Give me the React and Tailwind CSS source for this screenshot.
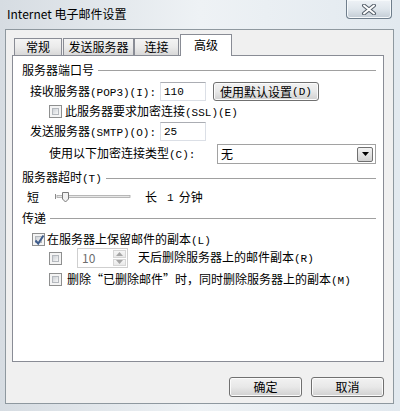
import React from "react";

// ASCII parts of the dialog text use a half-width mono look
function A({ children }) {
  return <span className="font-['Liberation_Mono',monospace] text-[11px]">{children}</span>;
}

function Check({ checked }) {
  return (
    <div className="relative w-[13px] h-[13px] shrink-0 border border-[#8e8f8f] bg-[#f4f4f4] p-[2px]">
      <div className="w-full h-full border border-[#b4b8bd] bg-gradient-to-br from-[#cdd1d6] to-[#f7f7f7]" />
      {checked && (
        <svg className="absolute inset-0" width="13" height="13" viewBox="0 0 13 13">
          <path d="M2.5 6.5 L5.2 9.5 L10.5 1.5" fill="none" stroke="#3e5c8c" strokeWidth="2" />
        </svg>
      )}
    </div>
  );
}

function Section({ title, className = "" }) {
  return (
    <div className={`flex items-center h-[14px] ${className}`}>
      <span className="whitespace-nowrap">{title}</span>
      <div className="flex-1 h-px bg-[#a0a0a0] ml-[4px]" />
    </div>
  );
}

function TextBox({ value }) {
  return (
    <div className="w-[46px] h-[19px] border border-[#dbdfe6] border-t-[#abadb3] bg-white flex items-center pl-[3px]">
      <A>{value}</A>
    </div>
  );
}

function Button({ children, className = "" }) {
  return (
    <div
      className={`flex items-center justify-center rounded-[3px] border border-[#707070] bg-gradient-to-b from-[#f2f2f2] via-[#e8e8e8] to-[#d0d0d0] shadow-[inset_0_0_0_1px_#fbfbfb] ${className}`}
    >
      {children}
    </div>
  );
}

function Tab({ label, selected, className = "" }) {
  if (selected) {
    return (
      <div className={`h-[22px] border border-b-0 border-[#898c95] bg-white flex items-center justify-center pb-[2px] ${className}`}>
        {label}
      </div>
    );
  }
  return (
    <div
      className={`h-[17px] mb-px border border-b-0 border-[#898c95] bg-gradient-to-b from-[#f4f4f4] via-[#ebebeb] to-[#d8d8d8] flex items-center justify-center ${className}`}
    >
      {label}
    </div>
  );
}

function CloseButton() {
  return (
    <div className="w-[46px] h-[19px] rounded-b-[4px] border border-t-0 border-[#6f7e8c] bg-gradient-to-b from-[#eef2f6] via-[#dfe6ec] to-[#c3ccd5] shadow-[inset_0_0_0_1px_#f6f9fb] flex items-center justify-center">
      <svg width="16" height="11" viewBox="0 0 16 11">
        <path d="M3 1.5 L13 9.5 M13 1.5 L3 9.5" stroke="#56606b" strokeWidth="4" strokeLinecap="round" />
        <path d="M3 1.5 L13 9.5 M13 1.5 L3 9.5" stroke="#ffffff" strokeWidth="2" strokeLinecap="round" />
      </svg>
    </div>
  );
}

function Slider() {
  return (
    <svg width="76" height="12" viewBox="0 0 76 12" className="shrink-0">
      <path d="M0.5 3 V8" stroke="#8a8a8a" />
      <rect x="2" y="4.5" width="73" height="2" fill="#e6e6e6" stroke="#a8a8a8" strokeWidth="0.8" />
      <path d="M7.5 1.5 H13.5 V8 L10.5 11 L7.5 8 Z" fill="#f1f1f1" stroke="#7a7a7a" />
    </svg>
  );
}

function Spinner() {
  return (
    <div className="w-[51px] h-[20px] border border-[#cfcfcf] bg-white flex">
      <div className="flex-1 flex items-center pl-[4px] text-[#6d6d6d]">10</div>
      <div className="w-[15px] flex flex-col p-px gap-px">
        <div className="flex-1 border border-[#d6d6d6] bg-gradient-to-b from-[#f6f6f6] to-[#e9e9e9] flex items-center justify-center">
          <svg width="7" height="4" viewBox="0 0 7 4">
            <path d="M0 4 L3.5 0 L7 4 Z" fill="#a6a6a6" />
          </svg>
        </div>
        <div className="flex-1 border border-[#d6d6d6] bg-gradient-to-b from-[#f6f6f6] to-[#e9e9e9] flex items-center justify-center">
          <svg width="7" height="4" viewBox="0 0 7 4">
            <path d="M0 0 L3.5 4 L7 0 Z" fill="#a6a6a6" />
          </svg>
        </div>
      </div>
    </div>
  );
}

function Select() {
  return (
    <div className="w-[159px] h-[20px] border border-[#a2a2a2] bg-white flex items-center">
      <span className="flex-1 pl-[3px]">无</span>
      <div className="w-[16px] h-[15px] mr-[2px] rounded-[2px] border border-[#707070] bg-gradient-to-b from-[#f3f3f3] to-[#d2d2d2] flex items-center justify-center">
        <svg width="7" height="4" viewBox="0 0 7 4">
          <path d="M0 0 H7 L3.5 4 Z" fill="#000" />
        </svg>
      </div>
    </div>
  );
}

export default function App() {
  return (
    <div className="w-[400px] h-[411px] overflow-hidden flex flex-col bg-gradient-to-r from-[#d6dce2] via-[#eef2f5] to-[#e2e9ef] text-black text-[12px] leading-[14px] font-['Noto_Sans_CJK_SC',sans-serif]">
      {/* Title bar */}
      <div className="h-[29px] flex items-start justify-between pl-[7px] pr-[8px] shrink-0">
        <div className="pt-[7px] text-[12px] leading-[14px]">Internet 电子邮件设置</div>
        <CloseButton />
      </div>

      {/* Client area */}
      <div className="ml-[5px] w-[389px] h-[375px] border border-[#8e989f] bg-[#f0f0f0] flex flex-col pt-[4px]">
        <div className="pl-[6px]">
          {/* Tabs */}
          <div className="relative z-10 flex items-end h-[22px] pl-[2px]">
            <Tab label="常规" className="w-[48px]" />
            <Tab label="发送服务器" className="w-[71px] ml-px" />
            <Tab label="连接" className="w-[45px]" />
            <Tab label="高级" selected className="w-[52px] ml-px" />
          </div>

          {/* Tab panel */}
          <div className="-mt-px w-[372px] h-[307px] border border-[#898c95] bg-white flex flex-col pl-[9px] pr-[7px] pt-[7px]">
            <Section title="服务器端口号" />

            <div className="mt-[5px] h-[19px] flex items-center pl-[8px]">
              <span className="w-[130px] whitespace-nowrap">
                接收服务器<A>(POP3)(I):</A>
              </span>
              <TextBox value="110" />
              <Button className="ml-[7px] w-[106px] h-[19px]">
                使用默认设置<A>(D)</A>
              </Button>
            </div>

            <div className="mt-[4px] h-[13px] flex items-center pl-[27px]">
              <Check />
              <span className="ml-[3px] whitespace-nowrap">
                此服务器要求加密连接<A>(SSL)(E)</A>
              </span>
            </div>

            <div className="mt-[4px] h-[19px] flex items-center pl-[8px]">
              <span className="w-[130px] whitespace-nowrap">
                发送服务器<A>(SMTP)(O):</A>
              </span>
              <TextBox value="25" />
            </div>

            <div className="mt-[3px] h-[20px] flex items-center pl-[27px]">
              <span className="w-[168px] whitespace-nowrap">
                使用以下加密连接类型<A>(C):</A>
              </span>
              <Select />
            </div>

            <Section
              className="mt-[7px]"
              title={
                <>
                  服务器超时<A>(T)</A>
                </>
              }
            />

            <div className="mt-[5px] h-[14px] flex items-center pl-[5px]">
              <span>短</span>
              <div className="ml-[16px] flex items-center">
                <Slider />
              </div>
              <span className="ml-[14px]">长</span>
              <span className="ml-[10px]">
                <A>1</A>
              </span>
              <span className="ml-[5px]">分钟</span>
            </div>

            <Section className="mt-[7px]" title="传递" />

            <div className="mt-[8px] h-[13px] flex items-center pl-[10px]">
              <Check checked />
              <span className="ml-[2px] whitespace-nowrap">
                在服务器上保留邮件的副本<A>(L)</A>
              </span>
            </div>

            <div className="mt-[2px] h-[20px] flex items-center pl-[27px]">
              <Check />
              <div className="ml-[15px]">
                <Spinner />
              </div>
              <span className="ml-[10px] whitespace-nowrap">
                天后删除服务器上的邮件副本<A>(R)</A>
              </span>
            </div>

            <div className="mt-[5px] h-[13px] flex items-center pl-[27px]">
              <Check />
              <span className="ml-[5px] whitespace-nowrap">
                删除“已删除邮件”时，同时删除服务器上的副本<A>(M)</A>
              </span>
            </div>
          </div>
        </div>

        {/* Dialog buttons */}
        <div className="mt-[15px] flex justify-end gap-[9px] pr-[9px]">
          <Button className="w-[73px] h-[20px]">确定</Button>
          <Button className="w-[73px] h-[20px]">取消</Button>
        </div>
      </div>
    </div>
  );
}
